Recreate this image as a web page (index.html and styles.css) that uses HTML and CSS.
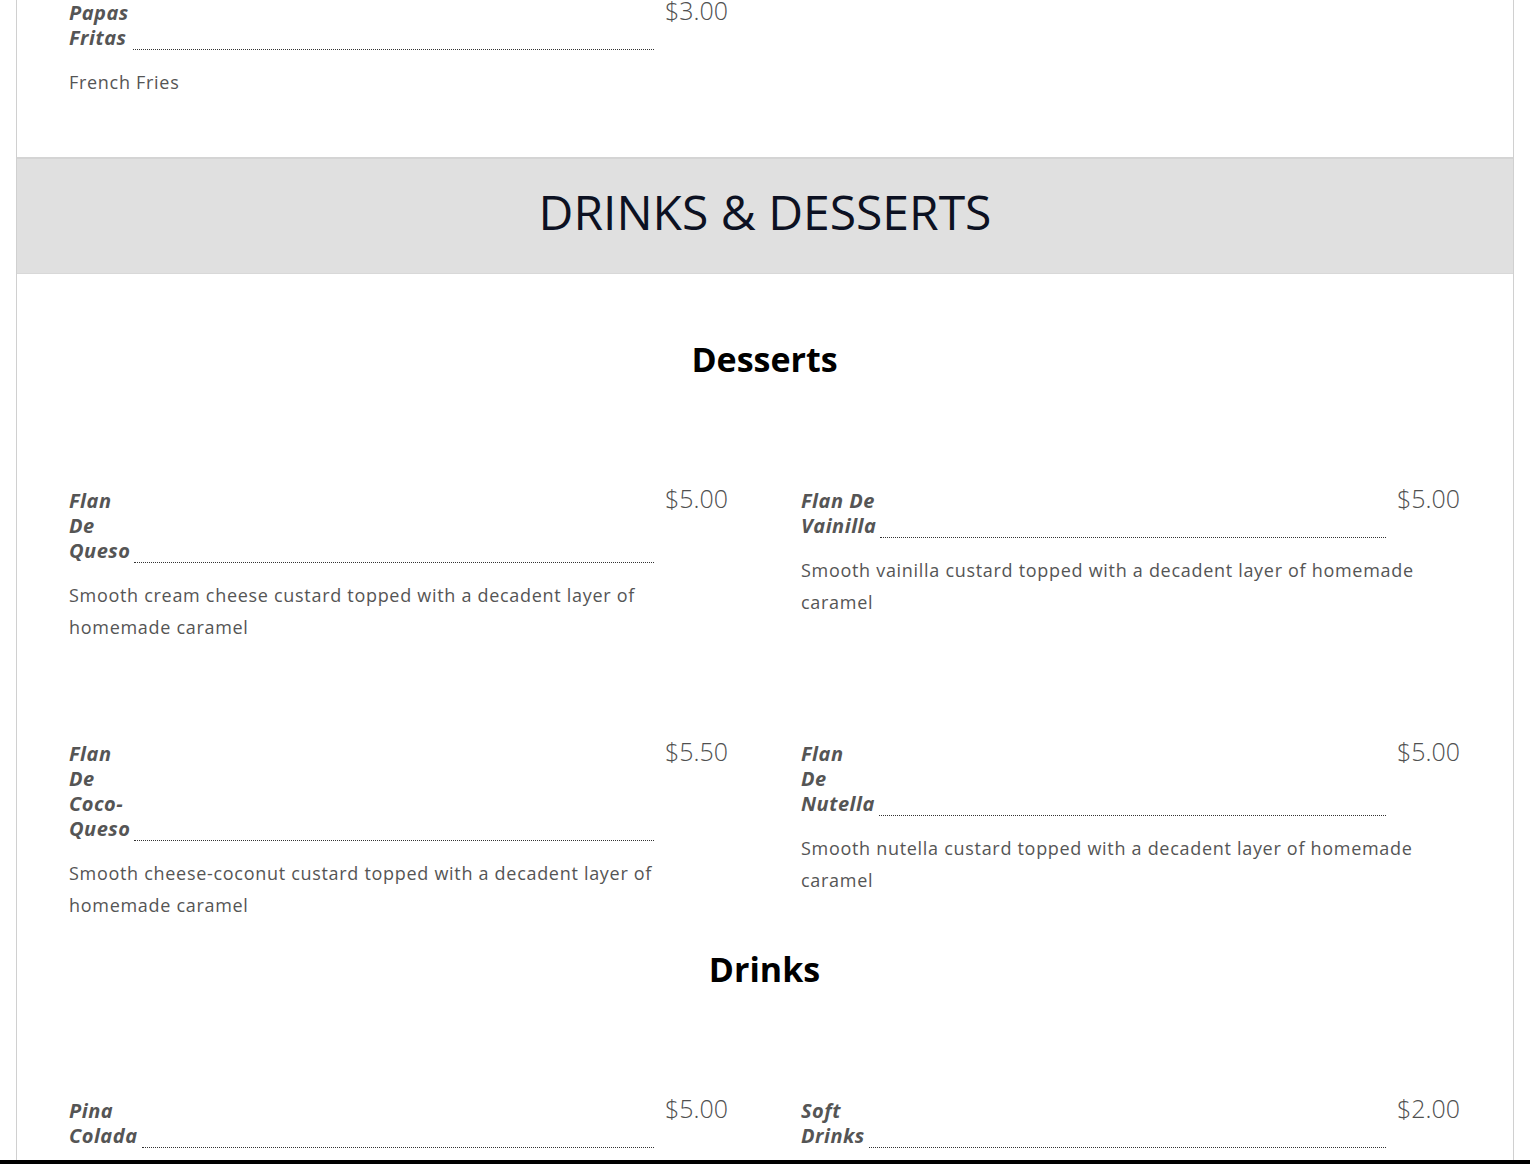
FILE: index.html
```html
<!DOCTYPE html>
<html lang="en">
<head>
<meta charset="utf-8">
<title>Menu - Drinks &amp; Desserts</title>
<link rel="stylesheet" href="styles.css">
</head>
<body>
<div class="card">
  <section class="menu-block menu-block--tail">
    <div class="menu-grid">
      <div class="item">
        <div class="item-row">
          <span class="item-name">Papas Fritas</span>
          <span class="item-sep"></span>
          <span class="item-price">$3.00</span>
        </div>
        <p class="item-desc">French Fries</p>
      </div>
    </div>
  </section>

  <header class="banner">
    <h1 class="banner-title">DRINKS &amp; DESSERTS</h1>
  </header>

  <section class="menu-block menu-block--main">
    <h2 class="group-title">Desserts</h2>
    <div class="menu-grid">
      <div class="item">
        <div class="item-row">
          <span class="item-name">Flan De Queso</span>
          <span class="item-sep"></span>
          <span class="item-price">$5.00</span>
        </div>
        <p class="item-desc">Smooth cream cheese custard topped with a decadent layer of homemade caramel</p>
      </div>
      <div class="item">
        <div class="item-row">
          <span class="item-name">Flan De Vainilla</span>
          <span class="item-sep"></span>
          <span class="item-price">$5.00</span>
        </div>
        <p class="item-desc">Smooth vainilla custard topped with a decadent layer of homemade caramel</p>
      </div>
      <div class="item">
        <div class="item-row">
          <span class="item-name">Flan De Coco-Queso</span>
          <span class="item-sep"></span>
          <span class="item-price">$5.50</span>
        </div>
        <p class="item-desc">Smooth cheese-coconut custard topped with a decadent layer of homemade caramel</p>
      </div>
      <div class="item">
        <div class="item-row">
          <span class="item-name">Flan De Nutella</span>
          <span class="item-sep"></span>
          <span class="item-price">$5.00</span>
        </div>
        <p class="item-desc">Smooth nutella custard topped with a decadent layer of homemade caramel</p>
      </div>
    </div>

    <h2 class="group-title">Drinks</h2>
    <div class="menu-grid">
      <div class="item">
        <div class="item-row">
          <span class="item-name">Pina Colada</span>
          <span class="item-sep"></span>
          <span class="item-price">$5.00</span>
        </div>
      </div>
      <div class="item">
        <div class="item-row">
          <span class="item-name">Soft Drinks</span>
          <span class="item-sep"></span>
          <span class="item-price">$2.00</span>
        </div>
      </div>
    </div>
  </section>
</div>
<div class="bottom-bar"></div>
</body>
</html>
```

FILE: styles.css
```css
html, body {
  margin: 0;
  padding: 0;
  background: #ffffff;
}

body {
  font-family: "Open Sans", "Liberation Sans", sans-serif;
  color: #555555;
}

.card {
  margin: 0 16px;
  border-left: 1px solid #d0d0d0;
  border-right: 1px solid #d0d0d0;
}

.menu-block {
  padding: 0 53px 0 52px;
}

.menu-block--tail {
  padding-bottom: 31px;
}

.menu-block--main {
  padding-top: 65px;
}

.menu-grid {
  display: grid;
  grid-template-columns: 1fr 1fr;
  column-gap: 73px;
  row-gap: 70px;
}

.item {
  padding-bottom: 28px;
}

.item-row {
  display: flex;
  align-items: flex-start;
}

.item-name {
  width: min-content;
  flex: none;
  font-size: 20px;
  line-height: 25px;
  font-weight: 700;
  font-style: italic;
  letter-spacing: 0.5px;
  color: #555555;
}

.item-sep {
  flex: 1 1 auto;
  align-self: stretch;
  border-bottom: 1px dotted #333333;
  margin: 0 11px 0 4px;
}

.item-price {
  flex: none;
  font-size: 25px;
  line-height: 21px;
  font-weight: 300;
  color: #505050;
}

.item-desc {
  margin: 16px 0 0;
  font-size: 18px;
  line-height: 32px;
  color: #555555;
  letter-spacing: 0.7px;
}

.banner {
  background: #e0e0e0;
  border-top: 2px solid #d4d4d4;
  border-bottom: 1px solid #d8d8d8;
  height: 114px;
  display: flex;
  align-items: center;
  justify-content: center;
}

.banner-title {
  margin: 0 0 8px;
  font-size: 48px;
  line-height: 56px;
  font-weight: 500;
  color: #0c1122;
  letter-spacing: 0;
}

.group-title {
  margin: 0 0 108px;
  text-align: center;
  font-size: 34px;
  line-height: 41px;
  font-weight: 700;
  color: #000000;
}

.bottom-bar {
  position: fixed;
  left: 0;
  right: 0;
  bottom: 0;
  height: 4px;
  background: #000000;
}
```
